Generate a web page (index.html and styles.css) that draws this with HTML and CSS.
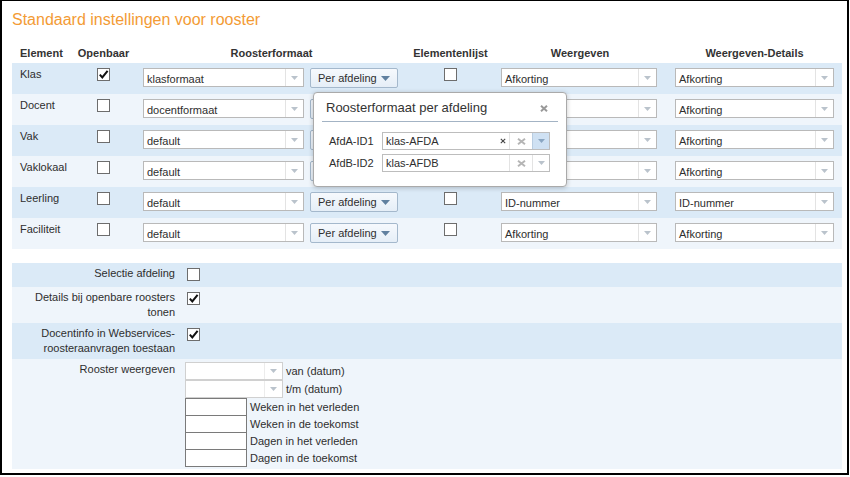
FILE: index.html
```html
<!DOCTYPE html>
<html lang="nl">
<head>
<meta charset="utf-8">
<title>Standaard instellingen voor rooster</title>
<link rel="stylesheet" href="styles.css">
</head>
<body>
<div class="frame">
  <h1 class="title">Standaard instellingen voor rooster</h1>

  <div class="board">
    <table class="grid">
      <colgroup>
        <col class="c1"><col class="c2"><col class="c3"><col class="c4"><col class="c5"><col class="c6">
      </colgroup>
      <thead>
        <tr>
          <th class="left">Element</th>
          <th>Openbaar</th>
          <th>Roosterformaat</th>
          <th>Elementenlijst</th>
          <th>Weergeven</th>
          <th>Weergeven-Details</th>
        </tr>
      </thead>
      <tbody>
        <tr class="dark">
          <td class="name">Klas</td>
          <td class="cc"><span class="cb"><svg width="11" height="11" viewBox="0 0 11 11"><path d="M1.8 5.6 L4.3 8.4 L9.6 1.8" fill="none" stroke="#111" stroke-width="2"/></svg></span></td>
          <td class="fmt"><div class="fmt-wrap"><div class="sel sel-fmt"><span class="sel-txt">klasformaat</span><span class="sel-arr"><svg width="7" height="4" viewBox="0 0 7 4"><path d="M0 0h7L3.5 4z" fill="#bac3cc"/></svg></span></div><div class="btn"><span>Per afdeling</span><svg width="9" height="5" viewBox="0 0 9 5"><path d="M0 0h9L4.5 5z" fill="#60809f"/></svg></div></div></td>
          <td class="cc"><span class="cb"></span></td>
          <td class="s5"><div class="sel"><span class="sel-txt">Afkorting</span><span class="sel-arr"><svg width="7" height="4" viewBox="0 0 7 4"><path d="M0 0h7L3.5 4z" fill="#bac3cc"/></svg></span></div></td>
          <td class="s6"><div class="sel"><span class="sel-txt">Afkorting</span><span class="sel-arr"><svg width="7" height="4" viewBox="0 0 7 4"><path d="M0 0h7L3.5 4z" fill="#bac3cc"/></svg></span></div></td>
        </tr>
        <tr class="light">
          <td class="name">Docent</td>
          <td class="cc"><span class="cb"></span></td>
          <td class="fmt"><div class="fmt-wrap"><div class="sel sel-fmt"><span class="sel-txt">docentformaat</span><span class="sel-arr"><svg width="7" height="4" viewBox="0 0 7 4"><path d="M0 0h7L3.5 4z" fill="#bac3cc"/></svg></span></div><div class="btn" aria-label="Per afdeling"></div></div></td>
          <td class="cc"><span class="cb"></span></td>
          <td class="s5"><div class="sel"><span class="sel-txt"></span><span class="sel-arr"><svg width="7" height="4" viewBox="0 0 7 4"><path d="M0 0h7L3.5 4z" fill="#bac3cc"/></svg></span></div></td>
          <td class="s6"><div class="sel"><span class="sel-txt">Afkorting</span><span class="sel-arr"><svg width="7" height="4" viewBox="0 0 7 4"><path d="M0 0h7L3.5 4z" fill="#bac3cc"/></svg></span></div></td>
        </tr>
        <tr class="dark">
          <td class="name">Vak</td>
          <td class="cc"><span class="cb"></span></td>
          <td class="fmt"><div class="fmt-wrap"><div class="sel sel-fmt"><span class="sel-txt">default</span><span class="sel-arr"><svg width="7" height="4" viewBox="0 0 7 4"><path d="M0 0h7L3.5 4z" fill="#bac3cc"/></svg></span></div><div class="btn" aria-label="Per afdeling"></div></div></td>
          <td class="cc"><span class="cb"></span></td>
          <td class="s5"><div class="sel"><span class="sel-txt"></span><span class="sel-arr"><svg width="7" height="4" viewBox="0 0 7 4"><path d="M0 0h7L3.5 4z" fill="#bac3cc"/></svg></span></div></td>
          <td class="s6"><div class="sel"><span class="sel-txt">Afkorting</span><span class="sel-arr"><svg width="7" height="4" viewBox="0 0 7 4"><path d="M0 0h7L3.5 4z" fill="#bac3cc"/></svg></span></div></td>
        </tr>
        <tr class="light">
          <td class="name">Vaklokaal</td>
          <td class="cc"><span class="cb"></span></td>
          <td class="fmt"><div class="fmt-wrap"><div class="sel sel-fmt"><span class="sel-txt">default</span><span class="sel-arr"><svg width="7" height="4" viewBox="0 0 7 4"><path d="M0 0h7L3.5 4z" fill="#bac3cc"/></svg></span></div><div class="btn" aria-label="Per afdeling"></div></div></td>
          <td class="cc"><span class="cb"></span></td>
          <td class="s5"><div class="sel"><span class="sel-txt"></span><span class="sel-arr"><svg width="7" height="4" viewBox="0 0 7 4"><path d="M0 0h7L3.5 4z" fill="#bac3cc"/></svg></span></div></td>
          <td class="s6"><div class="sel"><span class="sel-txt">Afkorting</span><span class="sel-arr"><svg width="7" height="4" viewBox="0 0 7 4"><path d="M0 0h7L3.5 4z" fill="#bac3cc"/></svg></span></div></td>
        </tr>
        <tr class="dark">
          <td class="name">Leerling</td>
          <td class="cc"><span class="cb"></span></td>
          <td class="fmt"><div class="fmt-wrap"><div class="sel sel-fmt"><span class="sel-txt">default</span><span class="sel-arr"><svg width="7" height="4" viewBox="0 0 7 4"><path d="M0 0h7L3.5 4z" fill="#bac3cc"/></svg></span></div><div class="btn"><span>Per afdeling</span><svg width="9" height="5" viewBox="0 0 9 5"><path d="M0 0h9L4.5 5z" fill="#60809f"/></svg></div></div></td>
          <td class="cc"><span class="cb"></span></td>
          <td class="s5"><div class="sel"><span class="sel-txt">ID-nummer</span><span class="sel-arr"><svg width="7" height="4" viewBox="0 0 7 4"><path d="M0 0h7L3.5 4z" fill="#bac3cc"/></svg></span></div></td>
          <td class="s6"><div class="sel"><span class="sel-txt">ID-nummer</span><span class="sel-arr"><svg width="7" height="4" viewBox="0 0 7 4"><path d="M0 0h7L3.5 4z" fill="#bac3cc"/></svg></span></div></td>
        </tr>
        <tr class="light">
          <td class="name">Faciliteit</td>
          <td class="cc"><span class="cb"></span></td>
          <td class="fmt"><div class="fmt-wrap"><div class="sel sel-fmt"><span class="sel-txt">default</span><span class="sel-arr"><svg width="7" height="4" viewBox="0 0 7 4"><path d="M0 0h7L3.5 4z" fill="#bac3cc"/></svg></span></div><div class="btn"><span>Per afdeling</span><svg width="9" height="5" viewBox="0 0 9 5"><path d="M0 0h9L4.5 5z" fill="#60809f"/></svg></div></div></td>
          <td class="cc"><span class="cb"></span></td>
          <td class="s5"><div class="sel"><span class="sel-txt">Afkorting</span><span class="sel-arr"><svg width="7" height="4" viewBox="0 0 7 4"><path d="M0 0h7L3.5 4z" fill="#bac3cc"/></svg></span></div></td>
          <td class="s6"><div class="sel"><span class="sel-txt">Afkorting</span><span class="sel-arr"><svg width="7" height="4" viewBox="0 0 7 4"><path d="M0 0h7L3.5 4z" fill="#bac3cc"/></svg></span></div></td>
        </tr>
      </tbody>
    </table>

    <div class="popup">
      <div class="pop-head">
        <span class="pop-title">Roosterformaat per afdeling</span>
        <svg class="pop-close" width="8" height="7" viewBox="0 0 8 7"><path d="M1 0.8 L7 6.2 M7 0.8 L1 6.2" stroke="#999" stroke-width="2"/></svg>
      </div>
      <div class="pop-rows">
        <div class="pop-row">
          <span class="pop-label">AfdA-ID1</span>
          <div class="pin">
            <span class="pin-txt">klas-AFDA</span>
            <span class="pin-clear"><svg width="6" height="6" viewBox="0 0 6 6"><path d="M0.8 0.8 L5.2 5.2 M5.2 0.8 L0.8 5.2" stroke="#444" stroke-width="1.1"/></svg></span>
            <span class="pin-x"><svg width="9" height="7" viewBox="0 0 9 7"><path d="M1 0.8 L8 6.2 M8 0.8 L1 6.2" stroke="#b5b5b5" stroke-width="2"/></svg></span>
            <span class="pin-arr hl"><svg width="7" height="4" viewBox="0 0 7 4"><path d="M0 0h7L3.5 4z" fill="#8aa6c2"/></svg></span>
          </div>
        </div>
        <div class="pop-row">
          <span class="pop-label">AfdB-ID2</span>
          <div class="pin">
            <span class="pin-txt">klas-AFDB</span>
            <span class="pin-x"><svg width="9" height="7" viewBox="0 0 9 7"><path d="M1 0.8 L8 6.2 M8 0.8 L1 6.2" stroke="#b5b5b5" stroke-width="2"/></svg></span>
            <span class="pin-arr"><svg width="7" height="4" viewBox="0 0 7 4"><path d="M0 0h7L3.5 4z" fill="#bac3cc"/></svg></span>
          </div>
        </div>
      </div>
    </div>
  </div>

  <div class="settings">
    <div class="srow dark h24">
      <div class="slabel">Selectie afdeling</div>
      <div class="sctrl"><span class="cb"></span></div>
    </div>
    <div class="srow light h36">
      <div class="slabel">Details bij openbare roosters<br>tonen</div>
      <div class="sctrl"><span class="cb"><svg width="11" height="11" viewBox="0 0 11 11"><path d="M1.8 5.6 L4.3 8.4 L9.6 1.8" fill="none" stroke="#111" stroke-width="2"/></svg></span></div>
    </div>
    <div class="srow dark h36">
      <div class="slabel">Docentinfo in Webservices-<br>roosteraanvragen toestaan</div>
      <div class="sctrl"><span class="cb"><svg width="11" height="11" viewBox="0 0 11 11"><path d="M1.8 5.6 L4.3 8.4 L9.6 1.8" fill="none" stroke="#111" stroke-width="2"/></svg></span></div>
    </div>
    <div class="srow light h110">
      <div class="slabel">Rooster weergeven</div>
      <div class="sctrl stack">
        <div class="drow"><div class="dsel"><span class="dsel-txt"></span><span class="dsel-arr"><svg width="7" height="4" viewBox="0 0 7 4"><path d="M0 0h7L3.5 4z" fill="#bac3cc"/></svg></span></div><span>van (datum)</span></div>
        <div class="drow"><div class="dsel"><span class="dsel-txt"></span><span class="dsel-arr"><svg width="7" height="4" viewBox="0 0 7 4"><path d="M0 0h7L3.5 4z" fill="#bac3cc"/></svg></span></div><span>t/m (datum)</span></div>
        <div class="nrow first"><span class="num"></span><span>Weken in het verleden</span></div>
        <div class="nrow"><span class="num"></span><span>Weken in de toekomst</span></div>
        <div class="nrow"><span class="num"></span><span>Dagen in het verleden</span></div>
        <div class="nrow"><span class="num"></span><span>Dagen in de toekomst</span></div>
      </div>
    </div>
  </div>
</div>
</body>
</html>
```

FILE: styles.css
```css
html, body {
  margin: 0;
  padding: 0;
  background: #ffffff;
}

body {
  font-family: "Liberation Sans", Arial, sans-serif;
  font-size: 11px;
  color: #2e2e2e;
}

.frame {
  width: 849px;
  height: 475px;
  box-sizing: border-box;
  border: 2px solid #000000;
  border-top-width: 1px;
  padding: 9px 0 0 10px;
}

.title {
  margin: 0 0 16px;
  font-size: 16px;
  line-height: 19px;
  font-weight: normal;
  color: #f39b35;
}

/* ---------- main grid ---------- */
.board {
  position: relative;
  width: 830px;
}

.grid {
  width: 830px;
  border-collapse: collapse;
  border-spacing: 0;
  table-layout: fixed;
}

.grid .c1 { width: 60px; }
.grid .c2 { width: 63px; }
.grid .c3 { width: 273px; }
.grid .c4 { width: 85px; }
.grid .c5 { width: 174px; }
.grid .c6 { width: 175px; }

.grid th {
  font-weight: bold;
  text-align: center;
  padding: 2px 0 3px;
  line-height: 13px;
  height: 13px;
  color: #333333;
  white-space: nowrap;
}

.grid th.left {
  text-align: left;
  padding-left: 8px;
}

.grid tbody tr {
  height: 31px;
}

.grid td {
  padding: 5px 0 0;
  vertical-align: top;
}

.dark { background: #dbeaf7; }
.light { background: #eff5fb; }

.grid td.name {
  padding: 4px 0 0 8px;
  line-height: 14px;
  white-space: nowrap;
}

.grid td.cc > .cb {
  margin: 0 auto;
}

.grid td.fmt {
  padding-left: 8px;
}

.grid td.s5 {
  padding-left: 8px;
  padding-right: 10px;
}

.grid td.s6 {
  padding-left: 8px;
  padding-right: 8px;
}

/* checkbox */
.cb {
  display: block;
  width: 13px;
  height: 13px;
  box-sizing: border-box;
  border: 1px solid #6d6d6d;
  background: #ffffff;
}

.cb svg {
  display: block;
}

/* select look-alike */
.fmt-wrap {
  display: flex;
  gap: 6px;
  align-items: flex-start;
}

.sel {
  display: flex;
  height: 19px;
  box-sizing: border-box;
  border: 1px solid #b9b9b9;
  background: #ffffff;
}

.sel-fmt {
  width: 161px;
  flex: none;
}

.sel-txt {
  flex: 1;
  padding: 3px 0 0 3px;
  line-height: 14px;
  white-space: nowrap;
  overflow: hidden;
}

.sel-arr {
  width: 17px;
  flex: none;
  border-left: 1px solid #e3e3e3;
  display: flex;
  align-items: center;
  justify-content: center;
}

.sel-arr svg {
  display: block;
}

/* button */
.btn {
  width: 88px;
  height: 20px;
  flex: none;
  box-sizing: border-box;
  border: 1px solid #a4b8cc;
  border-radius: 2px;
  background: linear-gradient(#f6f9fd, #e5eef7);
  padding: 0 7px;
  display: flex;
  align-items: center;
  justify-content: space-between;
  line-height: 14px;
  white-space: nowrap;
}

.btn svg {
  display: block;
}

/* ---------- popup ---------- */
.popup {
  position: absolute;
  left: 301px;
  top: 47px;
  width: 254px;
  height: 95px;
  box-sizing: border-box;
  background: #ffffff;
  border: 1px solid #aaaaaa;
  border-radius: 4px;
  box-shadow: 0 1px 5px rgba(0, 0, 0, 0.22);
  padding: 7px 8px 0;
}

.pop-head {
  display: flex;
  align-items: center;
  justify-content: space-between;
  padding: 0 10px 5px 4px;
  border-bottom: 1px solid #a3b3c4;
}

.pop-title {
  font-size: 13px;
  line-height: 16px;
  color: #333333;
}

.pop-close {
  display: block;
}

.pop-rows {
  padding-top: 10px;
  display: flex;
  flex-direction: column;
  gap: 4px;
}

.pop-row {
  display: flex;
  align-items: center;
}

.pop-label {
  width: 60px;
  box-sizing: border-box;
  padding-left: 7px;
  line-height: 18px;
}

.pin {
  width: 168px;
  height: 18px;
  box-sizing: border-box;
  border: 1px solid #bdbdbd;
  background: #ffffff;
  display: flex;
}

.pin-txt {
  flex: 1;
  padding-left: 3px;
  line-height: 16px;
  white-space: nowrap;
}

.pin-clear {
  width: 12px;
  display: flex;
  align-items: center;
  justify-content: center;
}

.pin-x {
  width: 22px;
  border-left: 1px solid #e3e3e3;
  display: flex;
  align-items: center;
  justify-content: center;
}

.pin-arr {
  width: 16px;
  border-left: 1px solid #e3e3e3;
  display: flex;
  align-items: center;
  justify-content: center;
}

.pin-arr.hl {
  background: #cfe1f3;
  border-left-color: #b9cde1;
}

.pin svg {
  display: block;
}

/* ---------- settings ---------- */
.settings {
  margin-top: 14px;
  width: 830px;
}

.srow {
  display: grid;
  grid-template-columns: 170px 1fr;
  box-sizing: border-box;
}

.h24 { height: 24px; }
.h36 { height: 36px; }
.h110 { height: 110px; }

.slabel {
  text-align: right;
  padding: 3px 7px 0 0;
  line-height: 15px;
}

.sctrl {
  padding: 5px 0 0 5px;
}

.sctrl.stack {
  padding: 3px 0 0 3px;
  display: flex;
  flex-direction: column;
}

.drow,
.nrow {
  display: flex;
  align-items: center;
  gap: 3px;
  line-height: 14px;
  white-space: nowrap;
}

.nrow {
  margin-top: -1px;
}

.nrow.first {
  margin-top: 0;
}

.dsel {
  width: 98px;
  height: 18px;
  box-sizing: border-box;
  border: 1px solid #d0d0d0;
  background: #ffffff;
  display: flex;
}

.dsel-txt {
  flex: 1;
}

.dsel-arr {
  width: 17px;
  border-left: 1px solid #ececec;
  display: flex;
  align-items: center;
  justify-content: center;
}

.dsel-arr svg {
  display: block;
}

.num {
  display: block;
  width: 62px;
  height: 18px;
  box-sizing: border-box;
  border: 1px solid #7a7a7a;
  background: #ffffff;
}
```
